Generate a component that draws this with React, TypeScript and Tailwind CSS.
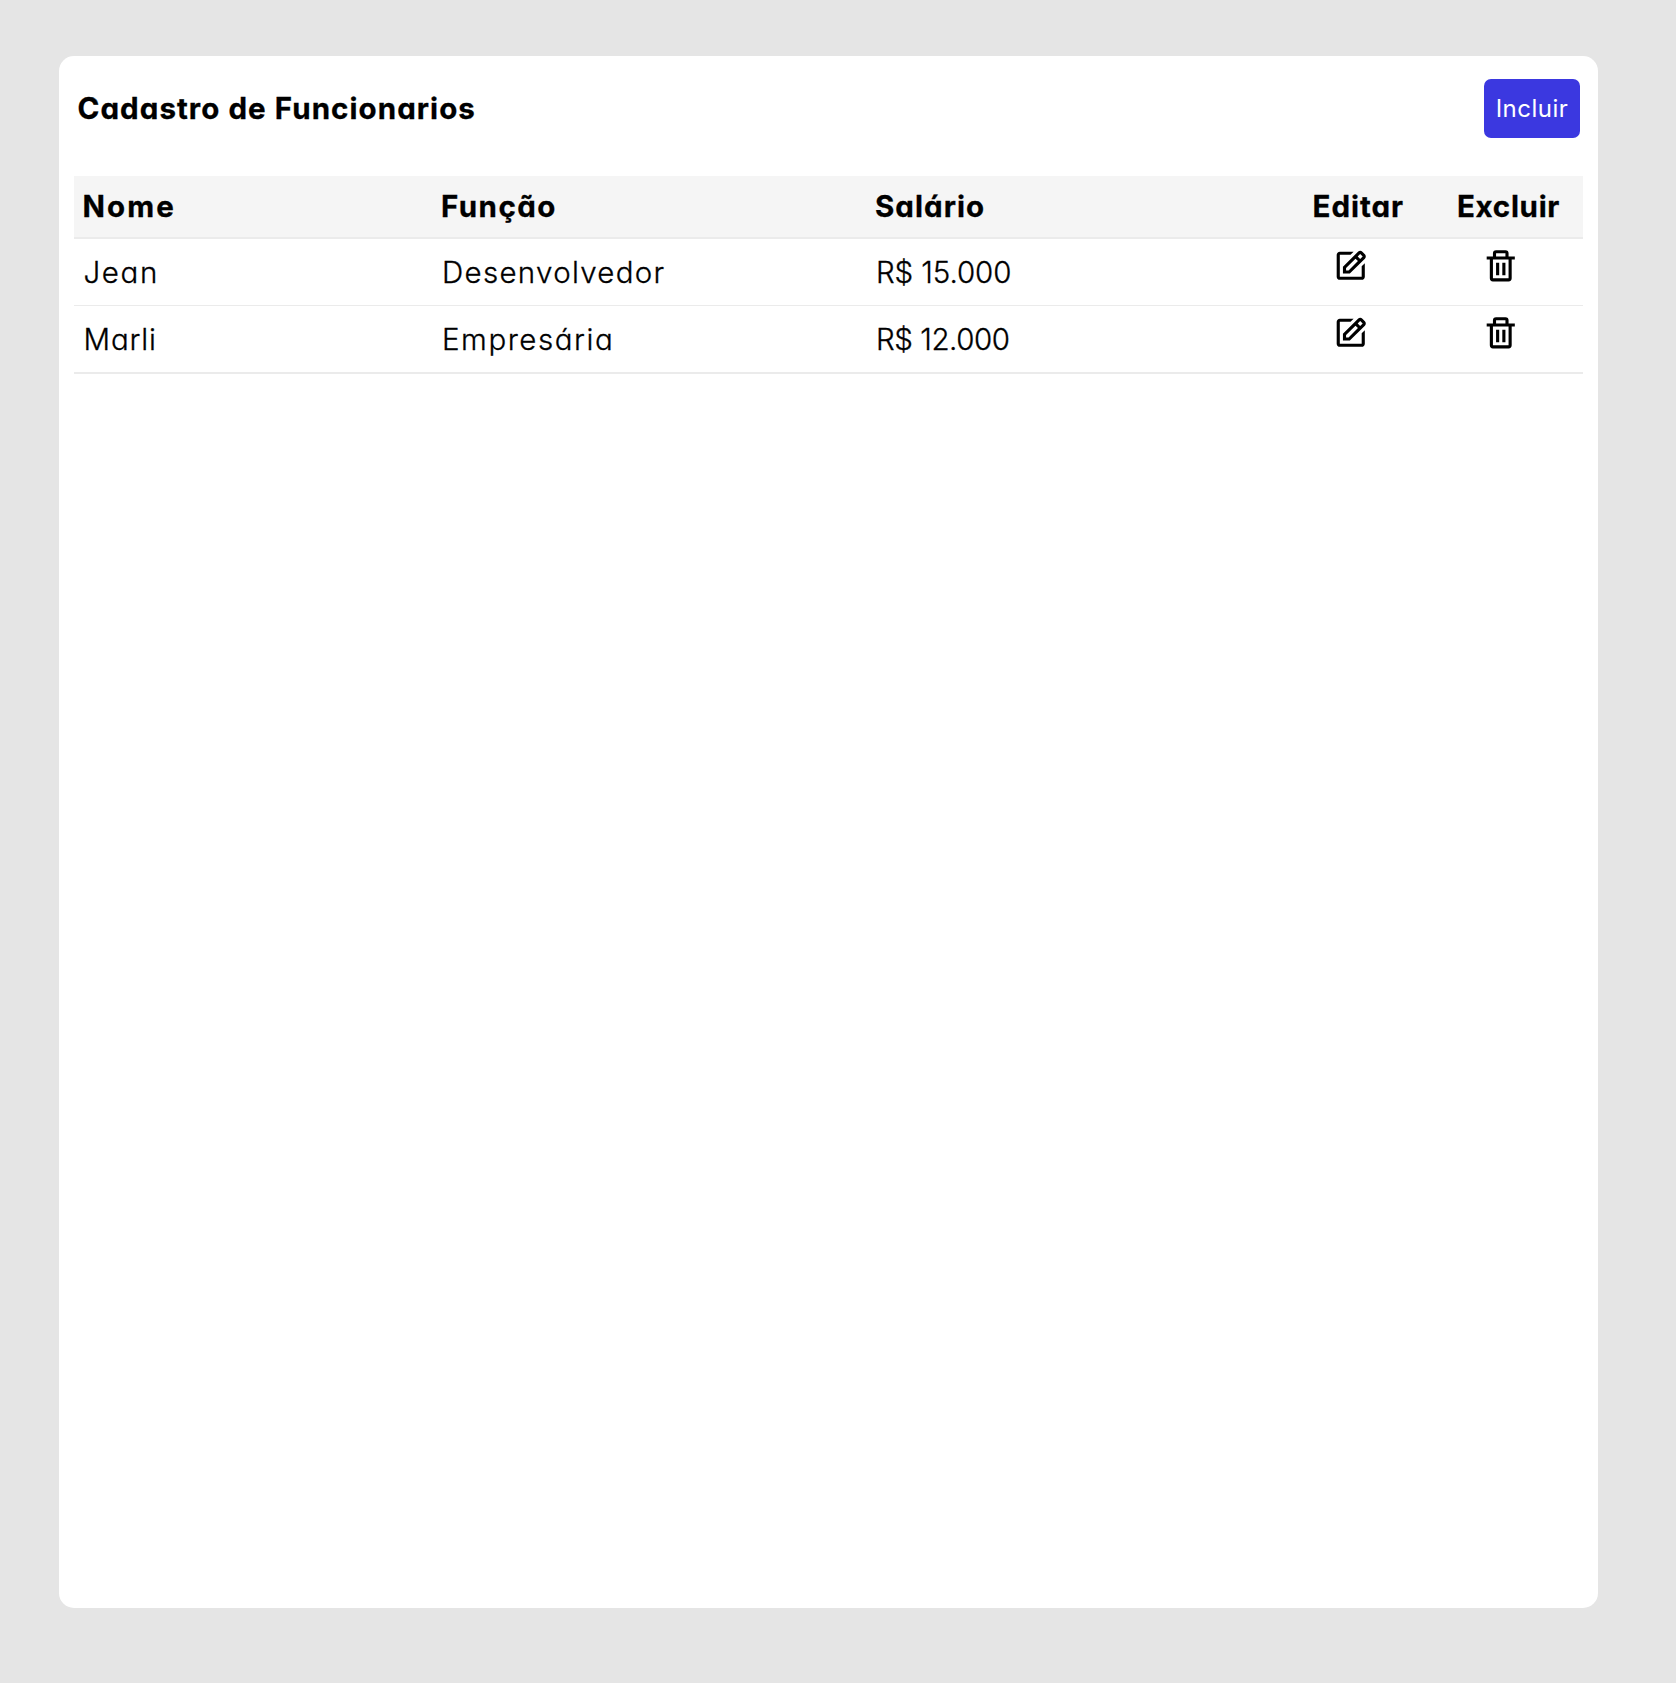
import { BiEdit, BiTrash } from 'react-icons/bi';

const rows = [
  {
    name: 'Jean',
    role: 'Desenvolvedor',
    pay: 'R$ 15.000',
    nameClass: 'tracking-[1.6px]',
    roleClass: 'tracking-[1.3px]',
    payClass: 'tracking-[-0.1px]',
    rowClass: 'h-[67px] border-b',
  },
  {
    name: 'Marli',
    role: 'Empresária',
    pay: 'R$ 12.000',
    nameClass: 'tracking-[0.85px]',
    roleClass: 'tracking-[1.55px]',
    payClass: 'tracking-[-0.45px]',
    rowClass: 'h-[68px] border-b-2',
  },
];

const cols = 'grid grid-cols-[358.5px_434px_437.5px_144.5px_124px] border-[#ebebeb]';

export default function App() {
  return (
    <div className="h-[1683px] bg-[#e5e5e5] pl-[59px] pt-[56px] font-['Inter',sans-serif] text-[29.5px] leading-[45px] text-black [font-feature-settings:'cv11'_1]">
      <main className="h-[1552px] w-[1539px] rounded-[15px] bg-white px-[15px]">
        <header className="flex h-[120px] items-start justify-between px-[3px] pt-[23px]">
          <h1 className="pl-[0.5px] pt-[7px] font-bold tracking-[1.07px] [-webkit-text-stroke:0.3px_black]">
            Cadastro de Funcionarios
          </h1>
          <button className="h-[59px] w-[96px] rounded-[7px] bg-[#3b38e0] pb-px text-[24px] tracking-[0.5px] text-white">
            Incluir
          </button>
        </header>
        <section>
          <div className={`${cols} h-[63px] border-b-2 bg-[#f5f5f5] pl-[8.5px] pt-[8px] font-bold [-webkit-text-stroke:0.3px_black]`}>
            <span className="tracking-[2.1px]">Nome</span>
            <span className="tracking-[1.45px]">Função</span>
            <span className="tracking-[1.05px]">Salário</span>
            <span className="tracking-[1px]">Editar</span>
            <span className="tracking-[0.7px]">Excluir</span>
          </div>
          {rows.map((r) => (
            <div key={r.name} className={`${cols} ${r.rowClass} pl-[9.5px] pt-[11px] font-light [-webkit-text-stroke:0.3px_black]`}>
              <span className={r.nameClass}>{r.name}</span>
              <span className={r.roleClass}>{r.role}</span>
              <span className={r.payClass}>{r.pay}</span>
              <div className="-mt-[3px] pl-[18px] [-webkit-text-stroke:0]">
                <BiEdit size={37.5} />
              </div>
              <div className="-mt-[3px] pl-[23.5px] [-webkit-text-stroke:0]">
                <BiTrash size={37.5} />
              </div>
            </div>
          ))}
        </section>
      </main>
    </div>
  );
}
